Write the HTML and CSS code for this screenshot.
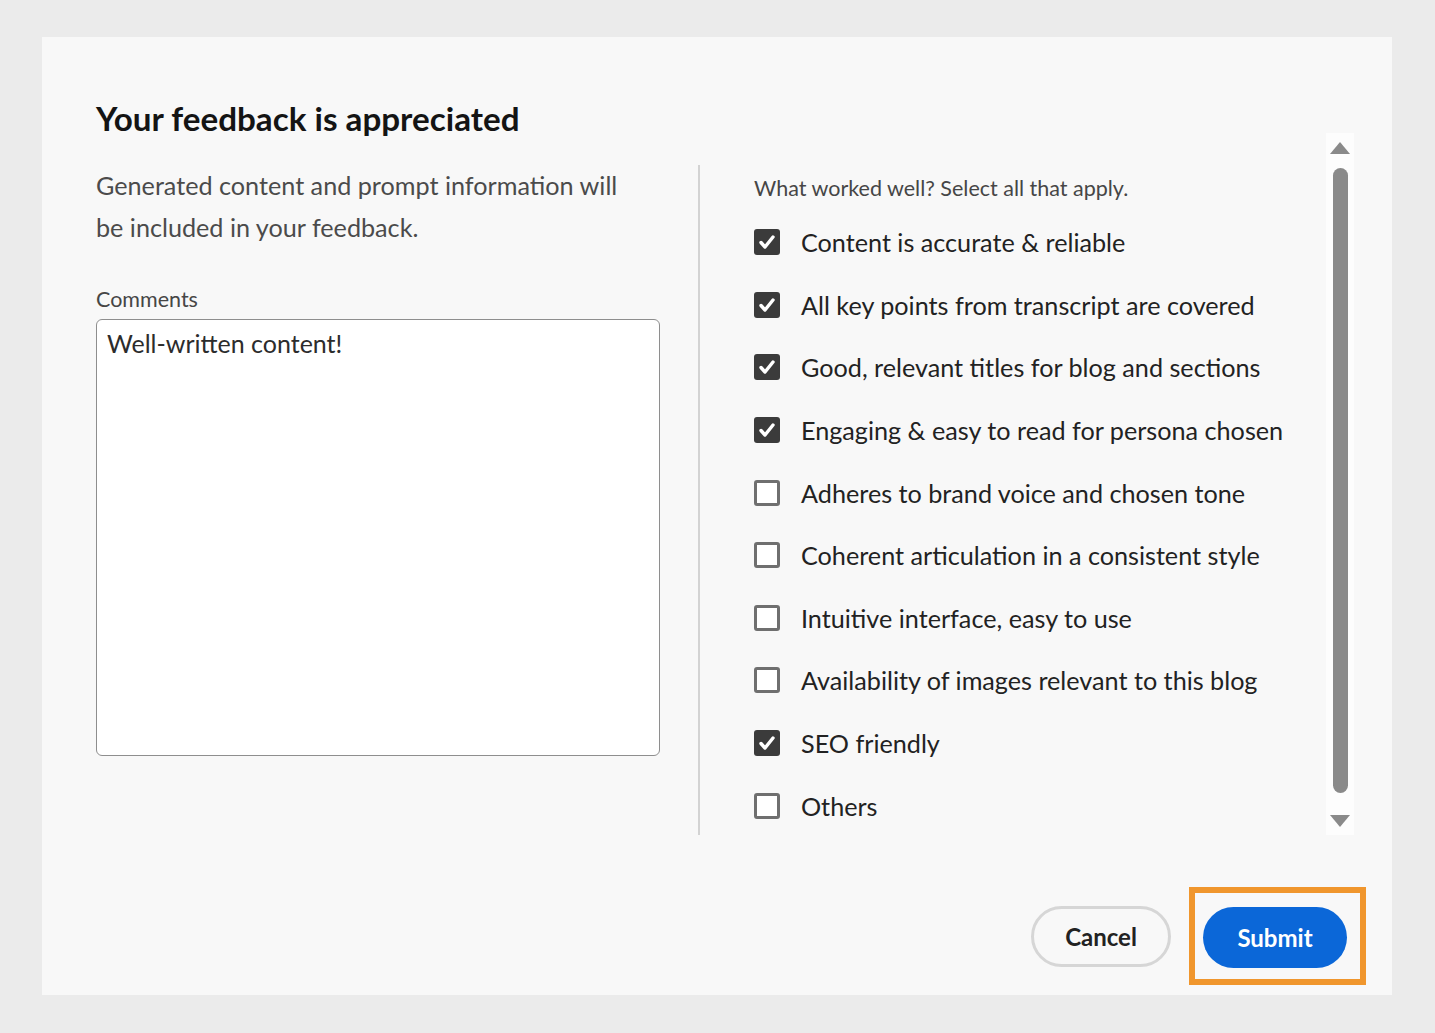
FILE: index.html
```html
<!DOCTYPE html>
<html lang="en">
<head>
    <meta charset="UTF-8">
    <title>Your feedback is appreciated</title>
    <link rel="stylesheet" href="styles.css">
</head>
<body>
    <div class="dialog">
        <h1 class="title">Your feedback is appreciated</h1>
        <div class="content">
            <div class="left">
                <p class="intro">Generated content and prompt information will be included in your feedback.</p>
                <label class="field-label" for="comments">Comments</label>
                <textarea id="comments" class="comments">Well-written content!</textarea>
            </div>
            <div class="divider"></div>
            <div class="right">
                <div class="options">
                    <p class="question">What worked well? Select all that apply.</p>
                    <ul class="checklist">
                        <li><span class="box checked"><svg viewBox="0 0 26 26"><path d="M7 13.5l4 4.5 8-10" /></svg></span>Content is accurate &amp; reliable</li>
                        <li><span class="box checked"><svg viewBox="0 0 26 26"><path d="M7 13.5l4 4.5 8-10" /></svg></span>All key points from transcript are covered</li>
                        <li><span class="box checked"><svg viewBox="0 0 26 26"><path d="M7 13.5l4 4.5 8-10" /></svg></span>Good, relevant titles for blog and sections</li>
                        <li><span class="box checked"><svg viewBox="0 0 26 26"><path d="M7 13.5l4 4.5 8-10" /></svg></span>Engaging &amp; easy to read for persona chosen</li>
                        <li><span class="box"></span>Adheres to brand voice and chosen tone</li>
                        <li><span class="box"></span>Coherent articulation in a consistent style</li>
                        <li><span class="box"></span>Intuitive interface, easy to use</li>
                        <li><span class="box"></span>Availability of images relevant to this blog</li>
                        <li><span class="box checked"><svg viewBox="0 0 26 26"><path d="M7 13.5l4 4.5 8-10" /></svg></span>SEO friendly</li>
                        <li><span class="box"></span>Others</li>
                    </ul>
                </div>
                <div class="scrollbar">
                    <span class="arrow up"></span>
                    <span class="thumb"></span>
                    <span class="arrow down"></span>
                </div>
            </div>
        </div>
        <div class="footer">
            <button class="btn cancel">Cancel</button>
            <span class="highlight"><button class="btn submit">Submit</button></span>
        </div>
    </div>
</body>
</html>
```

FILE: styles.css
```css
body {
    margin: 0;
    background-color: #ebebeb;
    font-family: Lato, "Noto Sans", sans-serif;
    padding: 37px 43px 38px 42px;
}
.dialog {
    background-color: #f8f8f8;
    height: 958px;
    padding: 0 26px 0 54px;
    box-sizing: border-box;
    display: flex;
    flex-direction: column;
}
.title {
    margin: 61px 0 0 0;
    font-size: 33.2px;
    line-height: 40px;
    font-weight: 700;
    color: #141414;
}
.content {
    display: flex;
    margin-top: -5px;
    height: 702px;
}
.left {
    width: 564px;
    padding-top: 31px;
}
.intro {
    margin: 0;
    max-width: 540px;
    font-size: 25.2px;
    line-height: 42px;
    color: #4b4b4b;
}
.field-label {
    display: block;
    margin-top: 39px;
    font-size: 21.5px;
    line-height: 24px;
    color: #464646;
}
.comments {
    display: block;
    box-sizing: border-box;
    width: 564px;
    height: 437px;
    margin-top: 8px;
    padding: 8px 10px;
    border: 1px solid #8e8e8e;
    border-radius: 6px;
    background: #fff;
    font-family: inherit;
    font-size: 25px;
    color: #2c2c2c;
    resize: none;
    outline: none;
}
.divider {
    width: 2px;
    background: #d3d3d3;
    margin: 32px 0 0 38px;
}
.right {
    flex: 1;
    display: flex;
    margin-left: 54px;
    margin-right: 12px;
}
.options {
    flex: 1;
}
.question {
    margin: 43px 0 0 0;
    font-size: 21.5px;
    line-height: 24px;
    color: #464646;
}
.checklist {
    list-style: none;
    margin: 11px 0 0 0;
    padding: 0;
}
.checklist li {
    display: flex;
    align-items: center;
    gap: 21px;
    height: 62.6px;
    font-size: 25.2px;
    color: #222;
}
.box {
    width: 26px;
    height: 26px;
    box-sizing: border-box;
    border: 3px solid #6f6f6f;
    border-radius: 3px;
    background: #fff;
    flex: none;
}
.box.checked {
    border: none;
    background: #3b3b3b;
}
.box svg {
    display: block;
    width: 26px;
    height: 26px;
}
.box path {
    fill: none;
    stroke: #fff;
    stroke-width: 3.4;
    stroke-linecap: round;
    stroke-linejoin: round;
}
.scrollbar {
    width: 28px;
    background: #fdfdfd;
    display: flex;
    flex-direction: column;
    align-items: center;
    padding: 9px 0 8px;
    box-sizing: border-box;
}
.arrow {
    width: 0;
    height: 0;
    border-left: 10px solid transparent;
    border-right: 10px solid transparent;
}
.arrow.up {
    border-bottom: 12px solid #8a8a8a;
}
.arrow.down {
    border-top: 12px solid #8a8a8a;
}
.thumb {
    width: 15px;
    flex: 1;
    margin: 14px 0 22px;
    background: #8a8a8a;
    border-radius: 8px;
}
.footer {
    display: flex;
    justify-content: flex-end;
    align-items: center;
    margin-top: 52px;
    gap: 18px;
}
.btn {
    height: 61px;
    border-radius: 31px;
    font-family: inherit;
    font-size: 24px;
    font-weight: 700;
    padding: 0 20px;
    cursor: pointer;
}
.cancel {
    width: 140px;
    background: #f8f8f8;
    border: 3px solid #d6d6d6;
    color: #222;
}
.submit {
    width: 144px;
    background: #0b67d8;
    border: none;
    color: #fff;
}
.highlight {
    display: inline-block;
    border: 6px solid #f0962d;
    padding: 14px 13px 11px 8px;
}
```
